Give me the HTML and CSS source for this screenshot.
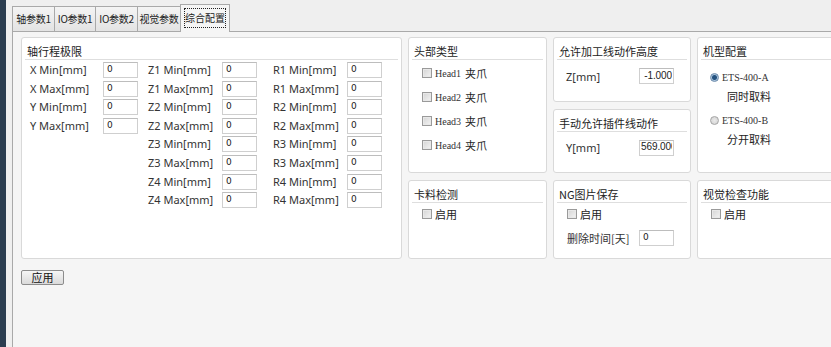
FILE: index.html
```html
<!DOCTYPE html>
<html lang="zh-CN">
<head>
  <meta charset="UTF-8" />
  <title>综合配置</title>
  <link rel="stylesheet" href="styles.css">
</head>
<body>

<div class="app">
  <div class="sidebar"></div>

  <div class="main">
    <div class="tabs">
      <div class="tab w43">轴参数1</div>
      <div class="tab w42">IO参数1</div>
      <div class="tab w43">IO参数2</div>
      <div class="tab w44">视觉参数</div>
      <div class="tab active"><span class="focus">综合配置</span></div>
    </div>

    <div class="page">
      <div class="groups">

        <!-- axis travel limits -->
        <div class="group axis">
          <div class="group-title">轴行程极限</div>
          <div class="axis-grid">
            <label>X Min[mm]</label><input class="field" value="0">
            <label>Z1 Min[mm]</label><input class="field" value="0">
            <label>R1 Min[mm]</label><input class="field" value="0">

            <label>X Max[mm]</label><input class="field" value="0">
            <label>Z1 Max[mm]</label><input class="field" value="0">
            <label>R1 Max[mm]</label><input class="field" value="0">

            <label>Y Min[mm]</label><input class="field" value="0">
            <label>Z2 Min[mm]</label><input class="field" value="0">
            <label>R2 Min[mm]</label><input class="field" value="0">

            <label>Y Max[mm]</label><input class="field" value="0">
            <label>Z2 Max[mm]</label><input class="field" value="0">
            <label>R2 Max[mm]</label><input class="field" value="0">

            <label class="skip">Z3 Min[mm]</label><input class="field" value="0">
            <label>R3 Min[mm]</label><input class="field" value="0">

            <label class="skip">Z3 Max[mm]</label><input class="field" value="0">
            <label>R3 Max[mm]</label><input class="field" value="0">

            <label class="skip">Z4 Min[mm]</label><input class="field" value="0">
            <label>R4 Min[mm]</label><input class="field" value="0">

            <label class="skip">Z4 Max[mm]</label><input class="field" value="0">
            <label>R4 Max[mm]</label><input class="field" value="0">
          </div>
        </div>

        <!-- head type -->
        <div class="group">
          <div class="group-title">头部类型</div>
          <div class="head-list">
            <div class="check-row"><span class="check"></span><span class="mono">Head1</span> 夹爪</div>
            <div class="check-row"><span class="check"></span><span class="mono">Head2</span> 夹爪</div>
            <div class="check-row"><span class="check"></span><span class="mono">Head3</span> 夹爪</div>
            <div class="check-row"><span class="check"></span><span class="mono">Head4</span> 夹爪</div>
          </div>
        </div>

        <!-- line heights -->
        <div class="stack">
          <div class="group">
            <div class="group-title">允许加工线动作高度</div>
            <div class="value-row">
              <span class="value-label">Z[mm]</span>
              <input class="field num" value="-1.000">
            </div>
          </div>
          <div class="group">
            <div class="group-title">手动允许插件线动作</div>
            <div class="value-row">
              <span class="value-label">Y[mm]</span>
              <input class="field num" value="569.000">
            </div>
          </div>
        </div>

        <!-- machine type -->
        <div class="group">
          <div class="group-title">机型配置</div>
          <div class="radio-list">
            <div class="radio-row"><span class="radio on"></span><span class="mono">ETS-400-A</span></div>
            <div class="radio-note">同时取料</div>
            <div class="radio-row"><span class="radio"></span><span class="mono">ETS-400-B</span></div>
            <div class="radio-note">分开取料</div>
          </div>
        </div>

        <div class="group">
          <div class="group-title">卡料检测</div>
          <div class="check-row small"><span class="check"></span>启用</div>
        </div>

        <div class="group">
          <div class="group-title">NG图片保存</div>
          <div class="check-row small"><span class="check"></span>启用</div>
          <div class="value-row days">
            <span class="value-label">删除时间[天]</span>
            <input class="field" value="0">
          </div>
        </div>

        <div class="group">
          <div class="group-title">视觉检查功能</div>
          <div class="check-row small"><span class="check"></span>启用</div>
        </div>

      </div>

      <button class="apply">应用</button>
    </div>
  </div>
</div>

</body>
</html>
```

FILE: styles.css
```css
html, body {
  margin: 0;
  padding: 0;
  height: 100%;
  overflow: hidden;
}

body {
  font-family: "Noto Sans", "Noto Sans CJK SC", sans-serif;
  font-size: 11px;
  color: #333;
  background: #efefef;
}

.app {
  display: flex;
  height: 100vh;
}

.sidebar {
  width: 6px;
  flex: none;
  background: #2b3d50;
}

.main {
  flex: 1;
  display: flex;
  flex-direction: column;
  padding: 4px 0 0 6px;
  min-width: 0;
}

/* tab strip */
.tabs {
  display: flex;
  align-items: flex-end;
  height: 28px;
  margin-bottom: -1px;
  position: relative;
  z-index: 1;
}

.tab {
  height: 25px;
  box-sizing: border-box;
  margin-bottom: 1px;
  margin-right: -1px;
  padding: 0;
  border: 1px solid #a9a9a9;
  border-bottom: none;
  background: linear-gradient(#f4f4f4, #e3e3e3);
  font-family: "Noto Sans CJK SC", sans-serif;
  font-size: 10px;
  letter-spacing: -0.3px;
  line-height: 23px;
  text-align: center;
  color: #222;
  white-space: nowrap;
  overflow: hidden;
}

.w42 { width: 42px; }
.w43 { width: 43px; }
.w44 { width: 44px; }

.tab.active {
  width: 50px;
  height: 28px;
  margin-bottom: 0;
  padding: 3px 3px 0;
  background: #f5f5f5;
  line-height: 18px;
  letter-spacing: 0;
}

.focus {
  display: block;
  border: 1px dotted #222;
  line-height: 18px;
}

/* tab page */
.page {
  flex: 1;
  border-top: 1px solid #a9a9a9;
  border-left: 1px solid #a9a9a9;
  background: #f5f5f5;
  padding: 5px 0 0 8px;
}

.groups {
  display: grid;
  grid-template-columns: 381px 139px 138px 140px;
  grid-template-rows: 136px 79px;
  column-gap: 6px;
  row-gap: 7px;
}

.group {
  background: #fff;
  border: 1px solid #d9d9d9;
  border-radius: 3px;
  box-sizing: border-box;
  min-height: 0;
}

.group.axis {
  grid-row: 1 / 3;
}

.stack {
  display: grid;
  grid-template-rows: 1fr 1fr;
  row-gap: 7px;
}

.group-title {
  margin: 0 3px;
  padding: 6px 2px 0;
  height: 15px;
  line-height: 15px;
  border-bottom: 1px solid #dedede;
  font-family: "Noto Sans CJK SC", sans-serif;
  font-size: 11px;
  color: #222;
}

/* inputs */
.field {
  width: 35px;
  height: 16px;
  box-sizing: border-box;
  margin: 0;
  padding: 0 3px 2px;
  border: 1px solid #cfcfcf;
  border-top-color: #bdbdbd;
  background: #fff;
  font-family: "DejaVu Sans", sans-serif;
  font-size: 9px;
  line-height: 14px;
  color: #222;
  vertical-align: top;
}

.field.num {
  text-align: right;
  padding: 0 1px 2px 1px;
  font-family: "Liberation Sans", sans-serif;
  font-size: 10px;
  letter-spacing: -0.1px;
}

/* axis limits */
.axis-grid {
  display: grid;
  grid-template-columns: 73px 45px 74px 51px 74px 35px;
  grid-auto-rows: 16px;
  row-gap: 2.6px;
  padding: 2px 0 0 8px;
}

.axis-grid label {
  font-size: 11px;
  line-height: 16px;
  color: #333;
  white-space: nowrap;
}

.axis-grid .skip {
  grid-column-start: 3;
}

/* checkboxes */
.head-list {
  display: flex;
  flex-direction: column;
  gap: 12px;
  padding: 7px 0 0 13px;
}

.check-row {
  display: flex;
  align-items: center;
  height: 12px;
  font-family: "Noto Sans CJK SC", sans-serif;
  font-size: 11px;
  color: #222;
  white-space: nowrap;
}

.check-row.small {
  padding: 5px 0 0 13px;
}

.check {
  width: 10px;
  height: 10px;
  box-sizing: border-box;
  margin-right: 3px;
  border: 1px solid #9a9a9a;
  background: linear-gradient(135deg, #d4d4d4, #f4f4f4);
  box-shadow: inset 0 0 0 1px #e8e8e8;
  flex: none;
}

.mono {
  font-family: "Liberation Serif", serif;
  font-size: 10px;
  margin-right: 4px;
  color: #333;
}

/* single value rows */
.value-row {
  display: flex;
  align-items: center;
  justify-content: space-between;
  padding: 8px 16px 0 12px;
}

.value-row.days {
  padding: 10px 16px 0 13px;
}

.value-label {
  font-size: 11px;
  color: #333;
  white-space: nowrap;
}

.days .value-label {
  font-family: "Noto Sans CJK SC", sans-serif;
}

/* radios */
.radio-list {
  padding: 11px 0 0 12px;
}

.radio-row {
  display: flex;
  align-items: center;
  height: 12px;
}

.radio {
  width: 9px;
  height: 9px;
  box-sizing: border-box;
  margin-right: 3px;
  border-radius: 50%;
  border: 1px solid #a5a5a5;
  background: radial-gradient(circle, #eaeaea, #d0d0d0);
  flex: none;
}

.radio.on {
  border-color: #6c8bab;
  background: radial-gradient(circle, #24527f 0 2px, #a9c3dc 3px);
}

.radio-note {
  padding: 7px 0 12px 17px;
  height: 12px;
  line-height: 12px;
  font-family: "Noto Sans CJK SC", sans-serif;
  font-size: 11px;
  color: #222;
}

/* apply button */
.apply {
  display: block;
  margin-top: 11px;
  width: 43px;
  height: 15px;
  padding: 0;
  border: 1px solid #8c8c8c;
  border-radius: 2px;
  background: linear-gradient(#f6f6f6, #dadada);
  font-family: "Noto Sans CJK SC", sans-serif;
  font-size: 11px;
  line-height: 13px;
  color: #111;
}
```
